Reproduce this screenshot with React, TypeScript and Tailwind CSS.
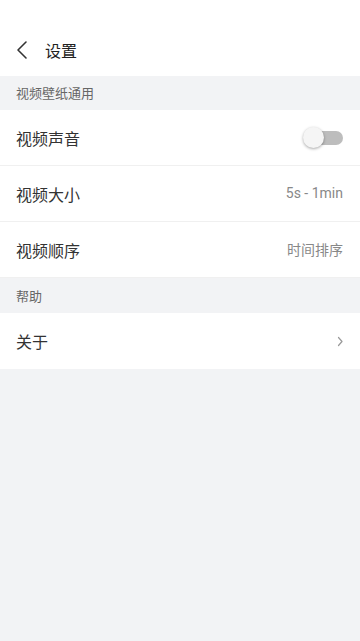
import React from "react";

const font = { fontFamily: '"Noto Sans CJK SC", Roboto, "Noto Sans", sans-serif' };

function Row({ label, children, border = true }: { label: string; children?: React.ReactNode; border?: boolean }) {
  return (
    <div className={`h-[56px] bg-white flex items-center justify-between pl-4 pr-[17px] ${border ? "border-b border-[#f0f0f0]" : ""}`}>
      <span className="text-[16px] text-[#333333] leading-none">{label}</span>
      {children}
    </div>
  );
}

export default function App() {
  return (
    <div className="w-[360px] min-h-[641px] bg-[#f2f3f5] flex flex-col" style={font}>
      <div className="h-[76px] bg-white flex items-end pb-[16px]">
        <svg width="40" height="20" viewBox="0 0 40 20" className="ml-[4px]">
          <path d="M22 2 L14 10 L22 18" fill="none" stroke="#333" strokeWidth="1.6" strokeLinecap="round" strokeLinejoin="round" />
        </svg>
        <span className="text-[16px] text-[#222] leading-5 ml-[1px]">设置</span>
      </div>
      <div className="h-[34px] flex items-center pl-4 text-[13px] text-[#666]">视频壁纸通用</div>
      <Row label="视频声音">
        <div className="relative w-[40px] h-[22px] flex items-center">
          <div className="absolute left-[4px] right-0 h-[14px] rounded-full bg-[#bdbdbd]" />
          <div className="absolute left-0 w-[21px] h-[21px] rounded-full bg-[#f5f5f5] shadow-[0_1px_3px_rgba(0,0,0,0.35)]" />
        </div>
      </Row>
      <Row label="视频大小">
        <span className="text-[14px] text-[#888]" style={{ fontFamily: "Roboto, sans-serif" }}>5s - 1min</span>
      </Row>
      <Row label="视频顺序">
        <span className="text-[14px] text-[#888]">时间排序</span>
      </Row>
      <div className="h-[35px] flex items-center pl-4 text-[13px] text-[#666]">帮助</div>
      <Row label="关于" border={false}>
        <svg width="7" height="11" viewBox="0 0 7 11" className="-mr-[1px]">
          <path d="M1.5 1.5 L5 5.5 L1.5 9.5" fill="none" stroke="#999" strokeWidth="1.2" strokeLinecap="round" strokeLinejoin="round" />
        </svg>
      </Row>
    </div>
  );
}
